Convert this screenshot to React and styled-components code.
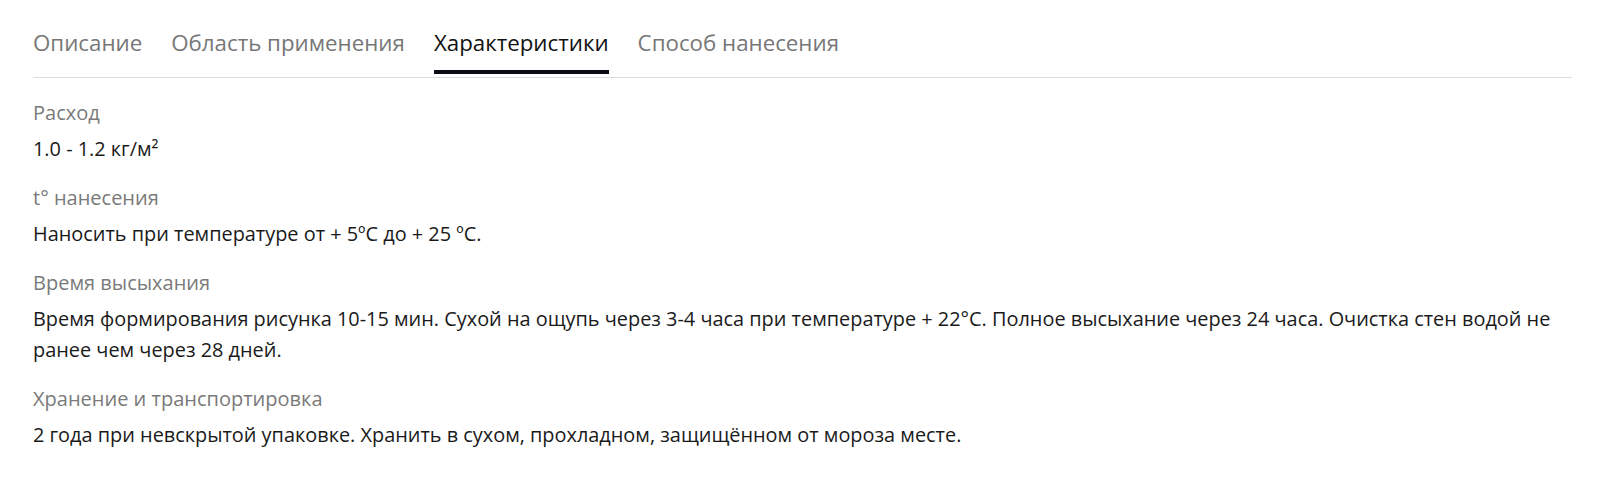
import React from "react";
import styled, { createGlobalStyle } from "styled-components";

const GlobalStyle = createGlobalStyle`
  body {
    margin: 0;
    background: #fff;
    font-family: "Open Sans", "Noto Sans", sans-serif;
  }
`;

const tabs = ["Описание", "Область применения", "Характеристики", "Способ нанесения"];

const specs = [
  { label: "Расход", value: "1.0 - 1.2 кг/м²" },
  { label: "t° нанесения", value: "Наносить при температуре от + 5ºC до + 25 ºC." },
  {
    label: "Время высыхания",
    value:
      "Время формирования рисунка 10-15 мин. Сухой на ощупь через 3-4 часа при температуре + 22°C. Полное высыхание через 24 часа. Очистка стен водой не ранее чем через 28 дней.",
  },
  {
    label: "Хранение и транспортировка",
    value: "2 года при невскрытой упаковке. Хранить в сухом, прохладном, защищённом от мороза месте.",
  },
];

const App = () => {
  return (
    <Page>
      <GlobalStyle />
      <TabList>
        {tabs.map((t) => (
          <Tab key={t} $active={t === "Характеристики"}>
            <TabLabel>{t}</TabLabel>
            <TabBar $active={t === "Характеристики"} />
          </Tab>
        ))}
      </TabList>
      <SpecList>
        {specs.map((s) => (
          <SpecItem key={s.label}>
            <SpecLabel>{s.label}</SpecLabel>
            <SpecValue>{s.value}</SpecValue>
          </SpecItem>
        ))}
      </SpecList>
    </Page>
  );
};

export default App;

const Page = styled.div`
  padding: 28px 39px 40px 33px;
`;

const TabList = styled.div`
  display: flex;
  gap: 29px;
  padding-bottom: 3px;
  border-bottom: 1px solid #dcdcdc;
`;

const Tab = styled.div`
  display: flex;
  flex-direction: column;
  gap: 12px;
  cursor: pointer;
  color: ${(p) => (p.$active ? "#111" : "#777")};
`;

const TabLabel = styled.span`
  font-size: 22.3px;
  line-height: 30px;
  white-space: nowrap;
`;

const TabBar = styled.div`
  height: 4px;
  background: ${(p) => (p.$active ? "#0b0b14" : "transparent")};
`;

const SpecList = styled.div`
  display: flex;
  flex-direction: column;
  gap: 20px;
  padding-top: 21px;
`;

const SpecItem = styled.div`
  display: flex;
  flex-direction: column;
  gap: 6px;
`;

const SpecLabel = styled.div`
  font-size: 20px;
  line-height: 28px;
  color: #7a7a7a;
`;

const SpecValue = styled.div`
  font-size: 19.9px;
  line-height: 31px;
  color: #1a1a1a;
`;
